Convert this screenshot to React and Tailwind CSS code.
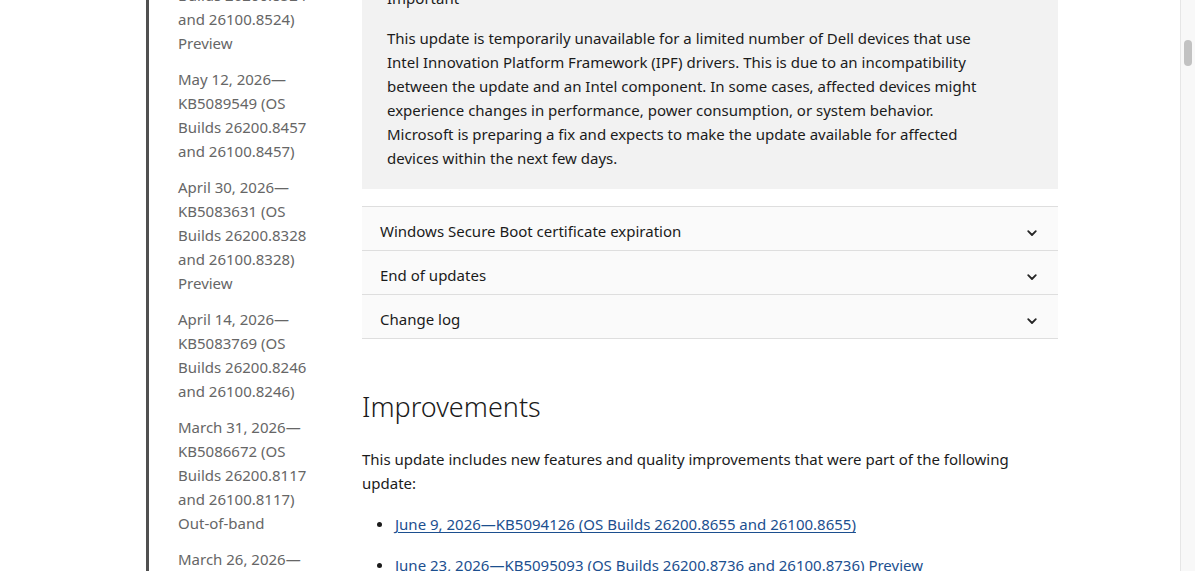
const SIDEBAR_ITEMS = [
  ['May 26, 2026—', 'KB5091890 (OS', 'Builds 26200.8524', 'and 26100.8524)', 'Preview'],
  ['May 12, 2026—', 'KB5089549 (OS', 'Builds 26200.8457', 'and 26100.8457)'],
  ['April 30, 2026—', 'KB5083631 (OS', 'Builds 26200.8328', 'and 26100.8328)', 'Preview'],
  ['April 14, 2026—', 'KB5083769 (OS', 'Builds 26200.8246', 'and 26100.8246)'],
  ['March 31, 2026—', 'KB5086672 (OS', 'Builds 26200.8117', 'and 26100.8117)', 'Out-of-band'],
  ['March 26, 2026—', 'KB5085516 (OS', 'Builds 26200.8037', 'and 26100.8037)', 'Preview'],
];

const NOTICE_LINES = [
  'This update is temporarily unavailable for a limited number of Dell devices that use',
  'Intel Innovation Platform Framework (IPF) drivers. This is due to an incompatibility',
  'between the update and an Intel component. In some cases, affected devices might',
  'experience changes in performance, power consumption, or system behavior.',
  'Microsoft is preparing a fix and expects to make the update available for affected',
  'devices within the next few days.',
];

const SECTIONS = ['Windows Secure Boot certificate expiration', 'End of updates', 'Change log'];

function Chevron() {
  return (
    <svg width="12" height="12" viewBox="0 0 12 12" className="mt-[3px] text-[#262626]">
      <path d="M2.2 4.2 L6 8 L9.8 4.2" fill="none" stroke="currentColor" strokeWidth="1.8" strokeLinecap="round" strokeLinejoin="round" />
    </svg>
  );
}

export default function App() {
  return (
    <div
      className="flex h-[571px] overflow-hidden bg-white text-[15px] leading-6"
      style={{ fontFamily: '"Noto Sans", "Open Sans", sans-serif' }}
    >
      <div className="flex flex-1 items-start overflow-hidden">
        {/* table of contents */}
        <nav className="ml-[146px] mt-[-65px] w-[216px] shrink-0 border-l-[3px] border-[#505050] pl-[29px] text-[#666666]">
          <ul className="flex flex-col gap-3 pb-10">
            {SIDEBAR_ITEMS.map((lines, i) => (
              <li key={i}>
                {lines.map((l, j) => (
                  <div key={j} className="whitespace-nowrap">{l}</div>
                ))}
              </li>
            ))}
          </ul>
        </nav>

        {/* article */}
        <main className="mt-[-34px] w-[696px] shrink-0 text-[#1b1b1b]">
          <div className="bg-[#f2f2f2] px-[25px] pt-5 pb-[19px]">
            <div>Important</div>
            <p className="mt-4">
              {NOTICE_LINES.map((l, i) => (
                <span key={i} className="block whitespace-nowrap">{l}</span>
              ))}
            </p>
          </div>

          <div className="mt-[17px] border-t border-[#dedede]">
            {SECTIONS.map((s) => (
              <button
                key={s}
                className="flex h-[44px] w-full items-center justify-between border-b border-[#dedede] bg-[#fafafa] pt-[5px] pl-[18px] pr-[20px] text-left"
              >
                <span>{s}</span>
                <Chevron />
              </button>
            ))}
          </div>

          <h2 className="mt-[48px] text-[27px] font-light leading-[40px] text-[#1b1b1b]">Improvements</h2>

          <p className="mt-[20px]">
            This update includes new features and quality improvements that were part of the following
            <br />
            update:
          </p>

          <ul className="mt-[17px] flex flex-col gap-[17px] pl-[15px]">
            {[
              'June 9, 2026—KB5094126 (OS Builds 26200.8655 and 26100.8655)',
              'June 23, 2026—KB5095093 (OS Builds 26200.8736 and 26100.8736) Preview',
            ].map((t) => (
              <li key={t} className="flex items-center gap-[13px]">
                <span className="h-[5px] w-[5px] rounded-full bg-[#1b1b1b]" />
                <a href="#" className="whitespace-nowrap text-[#1c4f8f] underline underline-offset-2">
                  {t}
                </a>
              </li>
            ))}
          </ul>
        </main>
      </div>

      {/* page scrollbar */}
      <div className="w-[15px] shrink-0 border-l border-[#e6e6e6] bg-[#f8f8f8] pt-[40px]">
        <div className="mx-auto h-[26px] w-[8px] rounded-full bg-[#c2c2c2]" />
      </div>
    </div>
  );
}
